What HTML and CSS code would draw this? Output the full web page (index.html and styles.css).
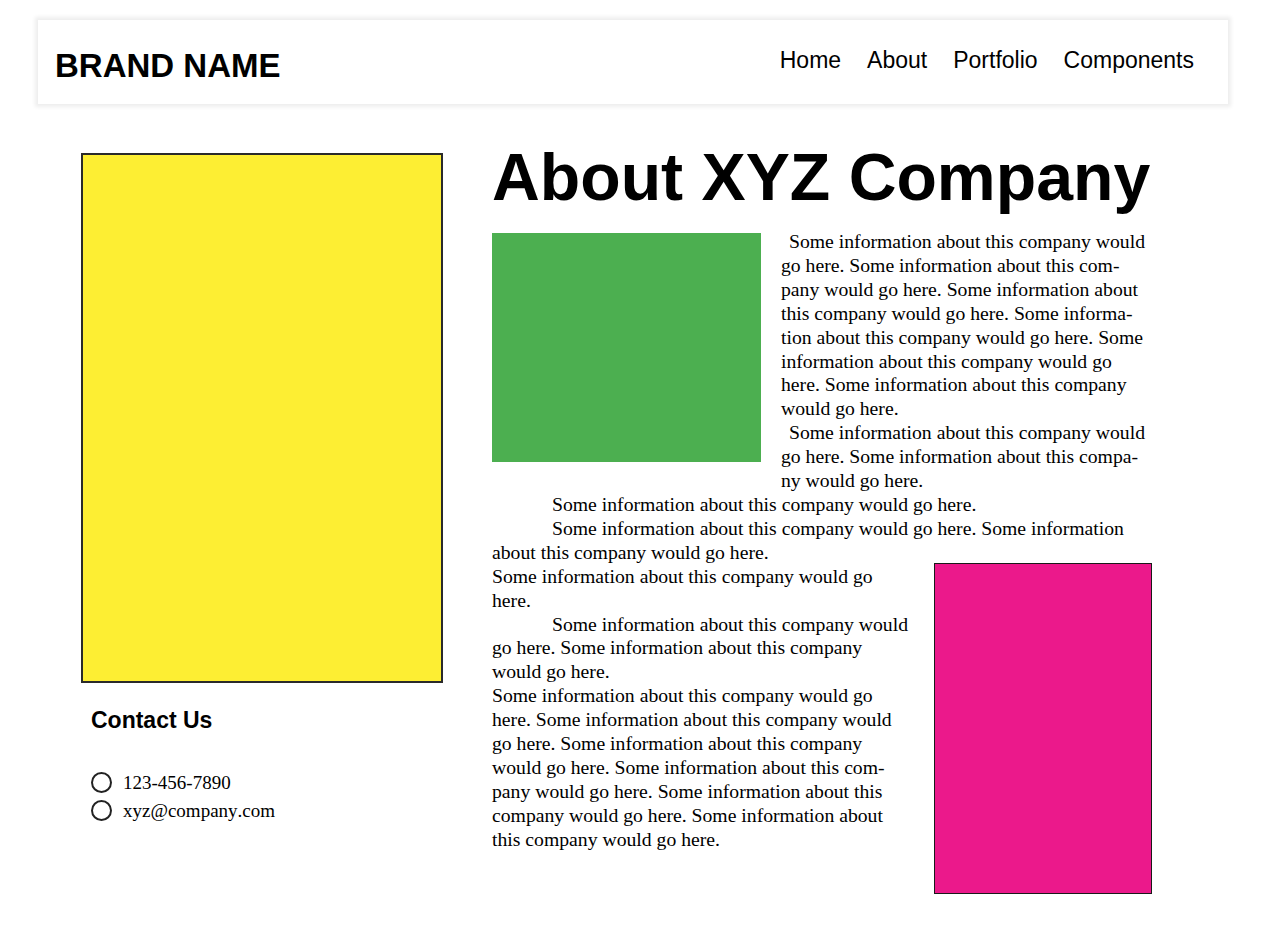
FILE: index.html
```html
<!DOCTYPE html>
<html lang="en">
<head>
<meta charset="utf-8">
<title>About XYZ Company</title>
<link rel="stylesheet" href="styles.css">
</head>
<body>
<header class="site-header">
  <div class="brand">BRAND NAME</div>
  <nav class="nav">
    <a href="#">Home</a>
    <a href="#">About</a>
    <a href="#">Portfolio</a>
    <a href="#">Components</a>
  </nav>
</header>
<main class="layout">
  <aside class="sidebar">
    <div class="photo"></div>
    <h2 class="contact-title">Contact Us</h2>
    <ul class="contact-list">
      <li><span class="bullet"></span>123-456-7890</li>
      <li><span class="bullet"></span>xyz@company.com</li>
    </ul>
  </aside>
  <section class="content">
    <h1 class="title">About XYZ Company</h1>
    <div class="intro">
      <div class="green-block"></div>
      <div class="intro-text">
        <p class="small-indent">Some information about this company would go here. Some information about this com&shy;pany would go here. Some information about this company would go here. Some informa&shy;tion about this company would go here. Some information about this company would go here. Some information about this company would go here.</p>
        <p class="small-indent">Some information about this company would go here. Some information about this compa&shy;ny would go here.</p>
      </div>
    </div>
    <div class="body-text">
      <p class="indent">Some information about this company would go here.</p>
      <p class="indent">Some information about this company would go here. Some information about this company would go here.</p>
      <div class="pink-block"></div>
      <p>Some information about this company would go here.</p>
      <p class="indent">Some information about this company would go here. Some information about this company would go here.</p>
      <p>Some information about this company would go here. Some information about this company would go here. Some information about this company would go here. Some information about this com&shy;pany would go here. Some information about this company would go here. Some information about this company would go here.</p>
    </div>
  </section>
</main>
</body>
</html>
```
FILE: styles.css
```css
html, body {
  margin: 0;
  padding: 0;
  background: #ffffff;
  color: #000000;
}

body {
  font-family: "Liberation Serif", "Times New Roman", serif;
  font-kerning: none;
}

.site-header {
  box-sizing: border-box;
  width: 1190px;
  height: 84px;
  margin: 20px 0 0 38px;
  padding: 29px 34px 0 17px;
  display: flex;
  justify-content: space-between;
  align-items: flex-start;
  background: #ffffff;
  box-shadow: 0 0 4px 3px rgba(0, 0, 0, 0.07);
}

.brand {
  font-family: "Liberation Sans", Arial, sans-serif;
  font-weight: bold;
  font-size: 33px;
  line-height: 1;
}

.nav {
  display: flex;
  gap: 26px;
}

.nav a {
  font-family: "Liberation Sans", Arial, sans-serif;
  font-size: 23px;
  line-height: 1;
  color: #000000;
  text-decoration: none;
}

.layout {
  display: grid;
  grid-template-columns: 362px 660px;
  column-gap: 49px;
  margin: 40px 0 0 81px;
  padding-bottom: 40px;
}

.sidebar {
  padding-top: 9px;
}

.photo {
  box-sizing: border-box;
  width: 362px;
  height: 530px;
  background: #fdee33;
  border: 2px solid #2a2a2a;
}

.contact-title {
  margin: 25.5px 0 0 10px;
  font-family: "Liberation Sans", Arial, sans-serif;
  font-weight: bold;
  font-size: 23px;
  line-height: 1;
}

.contact-list {
  list-style: none;
  margin: 37px 0 0 10px;
  padding: 0;
  font-size: 19px;
  line-height: 28px;
}

.contact-list li {
  display: flex;
  align-items: center;
  gap: 11px;
}

.bullet {
  box-sizing: border-box;
  width: 21px;
  height: 21px;
  border: 2px solid #222222;
  border-radius: 50%;
  flex: none;
}

.content {
  font-size: 19.7px;
  line-height: 23.9px;
}

.title {
  margin: 0;
  font-family: "Liberation Sans", Arial, sans-serif;
  font-weight: bold;
  font-size: 66.2px;
  line-height: 66px;
  white-space: nowrap;
}

.intro {
  display: flex;
  gap: 20px;
  margin-top: 20px;
}

.green-block {
  flex: none;
  width: 269px;
  height: 229px;
  margin-top: 3px;
  background: #4caf50;
}

.intro-text {
  width: 369px;
}

p {
  margin: 0;
}

.small-indent {
  text-indent: 8px;
}

.indent {
  text-indent: 60px;
}

.body-text {
  width: 660px;
}

.pink-block {
  box-sizing: border-box;
  float: right;
  width: 218px;
  height: 331px;
  margin: -1.5px 0 0 20px;
  background: #eb198b;
  border: 1.5px solid #1a1a1a;
}
```
